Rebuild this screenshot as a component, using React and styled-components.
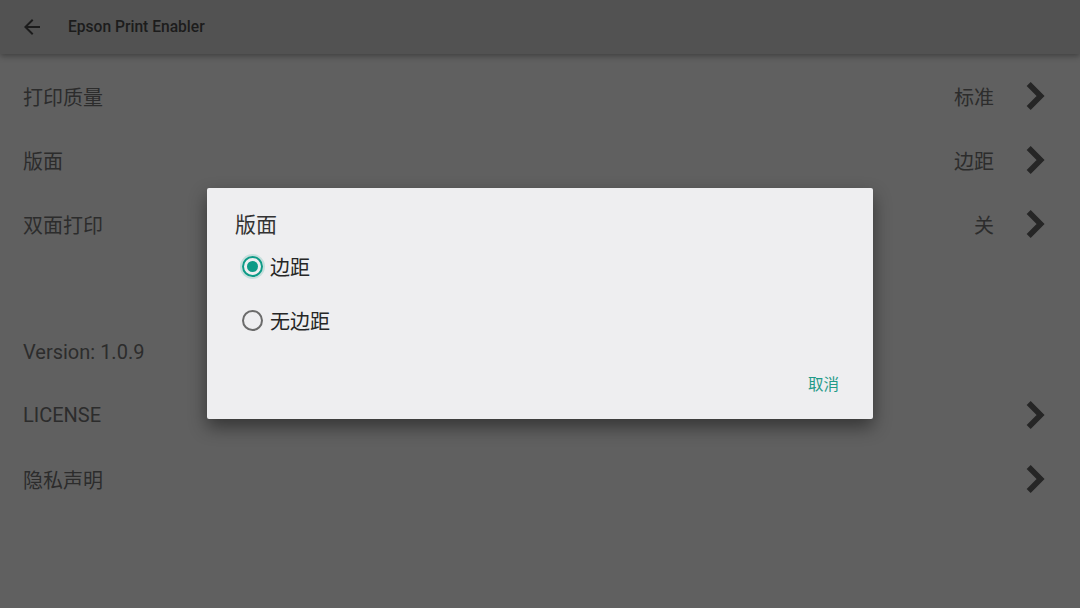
import React from "react";
import styled, { createGlobalStyle } from "styled-components";

const Global = createGlobalStyle`
  html, body {
    margin: 0;
    padding: 0;
    background: #606060;
  }
  body {
    font-family: Roboto, "Noto Sans CJK SC", sans-serif;
  }
`;

const Screen = styled.div`
  position: relative;
  width: 1080px;
  height: 608px;
  overflow: hidden;
  background: #606060;
`;

const Toolbar = styled.header`
  height: 54px;
  display: flex;
  align-items: center;
  background: #525252;
  box-shadow: 0 2px 6px rgba(0, 0, 0, 0.35);
  position: relative;
  z-index: 1;
`;

const BackButton = styled.div`
  width: 24px;
  height: 24px;
  margin-left: 20px;
  margin-right: 24px;
  display: flex;
`;

const Title = styled.h1`
  margin: 0;
  font-size: 15.6px;
  font-weight: 500;
  color: #1c1c1c;
`;

const List = styled.div`
  padding-top: 10px;
`;

const Row = styled.div`
  height: ${(p) => (p.$short ? "63px" : "64px")};
  display: flex;
  align-items: center;
  padding: 0 19px 0 23px;
`;

const Label = styled.span`
  flex: 1;
  font-size: 20px;
  color: #2c2c2c;
`;

const Value = styled.span`
  font-size: 20px;
  color: #2c2c2c;
  margin-right: 15px;
`;

const Chevron = styled.svg`
  width: 52px;
  height: 52px;
  fill: #262626;
`;

const Overlay = styled.div`
  position: absolute;
  inset: 0;
  z-index: 2;
`;

const Dialog = styled.div`
  position: absolute;
  left: 207px;
  top: 188px;
  width: 666px;
  height: 231px;
  background: #eeeef0;
  border-radius: 2px;
  box-shadow: 0 8px 18px rgba(0, 0, 0, 0.45);
  display: flex;
  flex-direction: column;
  box-sizing: border-box;
  padding: 23px 34px 0 28px;
`;

const DialogTitle = styled.div`
  font-size: 21px;
  color: #333;
  line-height: 28px;
`;

const Option = styled.label`
  display: flex;
  align-items: center;
  height: 54px;
  padding-left: 7px;
  font-size: 20px;
  color: #262626;
`;

const Radio = styled.span`
  width: 21px;
  height: 21px;
  box-sizing: border-box;
  border-radius: 50%;
  border: 2px solid ${(p) => (p.$checked ? "#0e9b87" : "#6b6b6b")};
  display: flex;
  align-items: center;
  justify-content: center;
  margin-right: 7px;
  box-shadow: ${(p) => (p.$checked ? "0 0 0 2px rgba(14,155,135,0.18)" : "none")};

  &::after {
    content: "";
    width: 11px;
    height: 11px;
    border-radius: 50%;
    background: #0e9b87;
    display: ${(p) => (p.$checked ? "block" : "none")};
  }
`;

const Actions = styled.div`
  display: flex;
  justify-content: flex-end;
  margin-top: 25px;
`;

const TextButton = styled.span`
  font-size: 15.5px;
  color: #1f9a88;
  margin-right: 0;
`;

const ChevronIcon = () => (
  <Chevron viewBox="0 0 24 24">
    <path d="M10 6L8.59 7.41 13.17 12l-4.58 4.59L10 18l6-6z" stroke="#262626" strokeWidth="0.6" />
  </Chevron>
);

const rows = [
  { label: "打印质量", value: "标准", arrow: true },
  { label: "版面", value: "边距", arrow: true },
  { label: "双面打印", value: "关", arrow: true },
  { label: "", spacer: true },
  { label: "Version: 1.0.9" },
  { label: "LICENSE", arrow: true },
  { label: "隐私声明", arrow: true },
];

export default function App() {
  return (
    <Screen>
      <Global />
      <Toolbar>
        <BackButton>
          <svg viewBox="0 0 24 24" width="24" height="24" fill="#1c1c1c">
            <path d="M20 11H7.83l5.59-5.59L12 4l-8 8 8 8 1.41-1.41L7.83 13H20v-2z" />
          </svg>
        </BackButton>
        <Title>Epson Print Enabler</Title>
      </Toolbar>
      <List>
        {rows.map((r, i) => (
          <Row key={i} $short={i === 4}>
            <Label>{r.label}</Label>
            {r.value && <Value>{r.value}</Value>}
            {r.arrow && <ChevronIcon />}
          </Row>
        ))}
      </List>
      <Overlay>
        <Dialog>
          <DialogTitle>版面</DialogTitle>
          <Option>
            <Radio $checked />
            边距
          </Option>
          <Option>
            <Radio />
            无边距
          </Option>
          <Actions>
            <TextButton>取消</TextButton>
          </Actions>
        </Dialog>
      </Overlay>
    </Screen>
  );
}
